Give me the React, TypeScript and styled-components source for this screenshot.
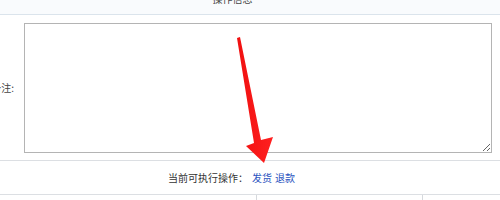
import React from "react";
import styled, { createGlobalStyle } from "styled-components";

const Global = createGlobalStyle`
  html, body { margin: 0; padding: 0; background: #fff; }
  body { width: 500px; height: 200px; overflow: hidden; font-family: "Noto Sans CJK SC", "Noto Sans", sans-serif; color: #333; }
`;

const Page = styled.div`
  position: relative;
  width: 500px;
  height: 200px;
  overflow: hidden;
`;

const Table = styled.div`
  display: flex;
  flex-direction: column;
  margin-top: -7px;
`;

const HeaderRow = styled.div`
  height: 22px;
  box-sizing: border-box;
  display: flex;
  align-items: center;
  justify-content: center;
  background: #f9fbfd;
  border-bottom: 1px solid #dbe4ec;
  font-size: 10px;
  color: #444;
  padding: 0 35px 11px 0;
`;

const Row = styled.div<{ $h: number }>`
  display: flex;
  height: ${(p) => p.$h}px;
  border-bottom: 1px solid #dcdfe3;
`;

const LabelCell = styled.div`
  width: 14px;
  flex: none;
  display: flex;
  align-items: center;
  justify-content: flex-end;
  white-space: nowrap;
  font-size: 10px;
  color: #444;
  overflow: hidden;
`;

const FieldCell = styled.div`
  flex: 1;
  padding: 8px 8px 7px 10px;
  display: flex;
`;

const Area = styled.textarea`
  flex: 1;
  margin: 0;
  box-sizing: border-box;
  border: 1px solid #b4b4b4;
  background: #fff;
  resize: both;
  outline: none;
  font-family: inherit;
`;

const ActionRow = styled.div`
  display: flex;
  height: 33px;
  align-items: center;
  justify-content: center;
  font-size: 10px;
  color: #333;
  border-bottom: 1px solid #dcdfe3;
  padding-right: 37px;
  white-space: nowrap;
`;

const Link = styled.a<{ $gap: number }>`
  color: #2b54c0;
  text-decoration: none;
  margin-left: ${(p) => p.$gap}px;
`;

const BottomRow = styled.div`
  display: grid;
  grid-template-columns: 256px 166px 1fr;
  height: 20px;
`;

const BottomCell = styled.div<{ $first?: boolean }>`
  border-left: ${(p) => (p.$first ? "none" : "1px solid #d6d9dd")};
`;

const Overlay = styled.svg`
  position: absolute;
  left: 0;
  top: 0;
  pointer-events: none;
`;

export default function App() {
  return (
    <Page>
      <Global />
      <Table>
        <HeaderRow>操作信息</HeaderRow>
        <Row $h={145}>
          <LabelCell>备注:</LabelCell>
          <FieldCell>
            <Area />
          </FieldCell>
        </Row>
        <ActionRow>
          <span>当前可执行操作：</span>
          <Link href="#" $gap={4}>发货</Link>
          <Link href="#" $gap={3}>退款</Link>
        </ActionRow>
        <BottomRow>
          <BottomCell $first />
          <BottomCell />
          <BottomCell />
        </BottomRow>
      </Table>
      <Overlay width="500" height="200" viewBox="0 0 500 200">
        <defs>
          <linearGradient id="rg" x1="0" y1="0" x2="1" y2="0">
            <stop offset="0" stopColor="#f01010" />
            <stop offset="1" stopColor="#ff2020" />
          </linearGradient>
        </defs>
        <polygon
          points="237,38 240,37 261,140 273,137 264,163 246,146 254,143"
          fill="url(#rg)"
        />
      </Overlay>
    </Page>
  );
}
